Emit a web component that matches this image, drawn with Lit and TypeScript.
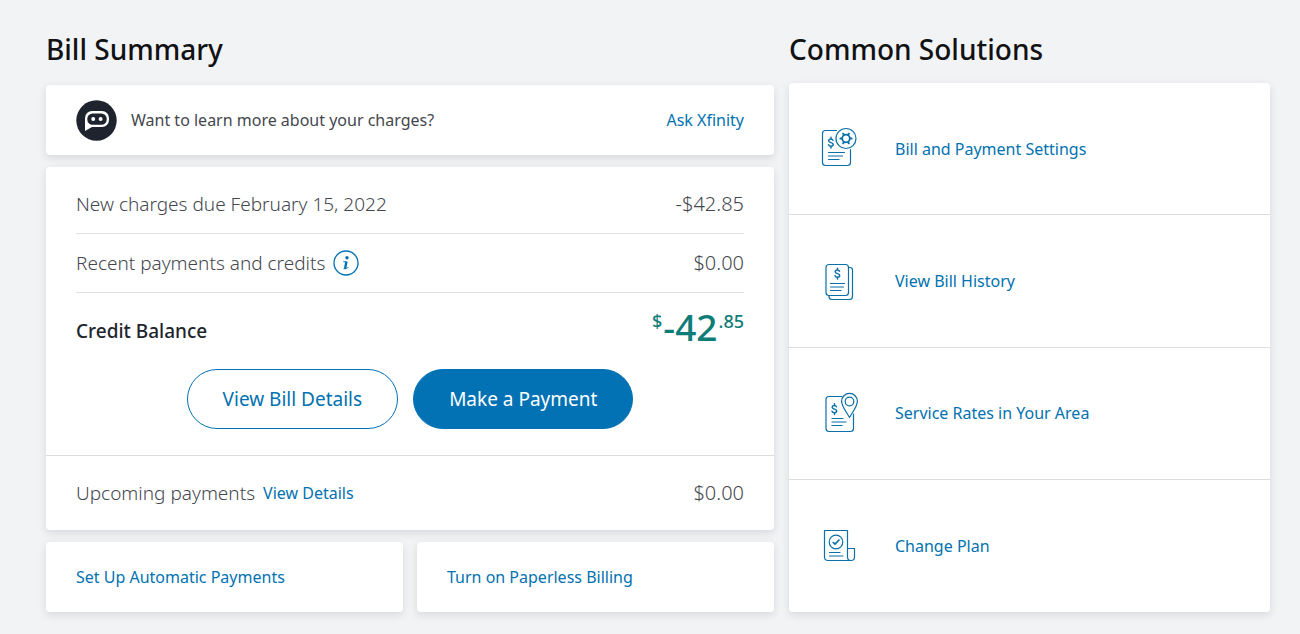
import { LitElement, html, css, svg } from "lit";
import { customElement } from "lit/decorators.js";

const dollar = (x: number, y: number) => svg`
  <path transform="translate(${x} ${y})" stroke-width="1.5"
    d="M5 3.2C4.6 2.3 3.8 2 2.8 2 1.500 2 .7 2.700 .7 3.700c0 2.500 4.500 1.300 4.500 3.800C5.200 8.600 4.200 9.200 3 9.200 1.800 9.200 .9 8.700 .5 7.700M3 .2V2M3 9.200V11" />`;

const settingsIcon = svg`
  <g transform="translate(0 1)">
    <path d="M26.500 10.500H15.500a3 3 0 0 0-3 3v29a3 3 0 0 0 3 3h22a3 3 0 0 0 3-3V29.500" />
    ${dollar(18, 17)}
    <path d="M18.500 32.500h16M18.500 36h14M18.500 39.500h10.500" />
    <circle cx="36" cy="18.500" r="10" />
    <circle cx="36" cy="18.500" r="3.800" stroke-width="1.800" />
    <path stroke-width="2" d="M33.800 14.700l-.6-1M38.200 14.700l.6-1M40.400 18.500h1.200M38.200 22.300l.6 1M33.800 22.300l-.6 1M31.600 18.500h-1.200" />
  </g>`;

const historyIcon = svg`
  <g transform="translate(0 -1)">
    <rect x="16" y="14.500" width="22.500" height="31" rx="3" />
    <path d="M38.500 17.500h1.500a2.500 2.500 0 0 1 2.500 2.500v26.500a3 3 0 0 1-3 3H22a3 3 0 0 1-3-3v-1" />
    ${dollar(24.5, 18)}
    <path d="M20.500 33.500h14M20.500 37h13M20.500 40.500h10.500" />
  </g>`;

const ratesIcon = svg`
  <g transform="translate(0 -1)">
    <path d="M32 14.500H19a3 3 0 0 0-3 3v29a3 3 0 0 0 3 3h21.500a3 3 0 0 0 3-3V32" />
    ${dollar(21.5, 21.5)}
    <path d="M22 36.500h11M22 40h14M22 43.500h10" />
    <path d="M39.500 35.500C36.500 30 31.600 24.500 31.600 19.300a7.900 7.900 0 0 1 15.800 0c0 5.200-4.900 10.700-7.900 16.200z" />
    <circle cx="39.500" cy="19.500" r="4.300" />
  </g>`;

const planIcon = svg`
  <path d="M14.500 14.500h23v26.500a3.500 3.500 0 0 0 7 0V32.500h-7M14.500 14.500v26.500a3.500 3.500 0 0 0 3.500 3.500h23" />
  <circle cx="26" cy="26" r="6.800" />
  <path stroke-width="1.700" d="M23.200 26.500l1.800 1.700 4-4.200" />
  <path d="M19.500 36.500h10.500M19.500 40h13.500" />`;

const solutions = [
  { label: "Bill and Payment Settings", icon: settingsIcon },
  { label: "View Bill History", icon: historyIcon },
  { label: "Service Rates in Your Area", icon: ratesIcon },
  { label: "Change Plan", icon: planIcon },
];

@customElement("app-root")
export class AppRoot extends LitElement {
  static styles = css`
    :host {
      display: block;
      min-height: 100vh;
      box-sizing: border-box;
      padding: 29px 30px 20px 46px;
      background: #f2f3f5;
      color: #44474e;
      font-family: "Noto Sans", "Open Sans", sans-serif;
      font-size: 16px;
      line-height: 24px;
    }
    * { box-sizing: border-box; }
    .page {
      display: grid;
      grid-template-columns: minmax(0, 728fr) minmax(0, 481fr);
      gap: 15px;
    }
    .column { display: flex; flex-direction: column; }
    h2 {
      margin: 0;
      font-size: 28px;
      line-height: 40px;
      font-weight: 500;
      color: #111214;
    }
    .summary { gap: 12px; }
    .summary h2 { margin-bottom: 4px; }
    .solutions { gap: 14px; }
    .card {
      background: #fff;
      border-radius: 4px;
      box-shadow: 0 3px 8px rgba(20, 30, 50, 0.12);
    }
    a { color: #0272b0; text-decoration: none; }
    .ask {
      display: flex;
      align-items: center;
      gap: 14px;
      height: 70px;
      padding: 0 30px;
    }
    .ask a { margin-left: auto; }
    .bot { width: 41px; height: 41px; display: block; }
    .charges { padding: 8px 30px 26px; }
    .row {
      display: flex;
      align-items: center;
      justify-content: space-between;
      font-size: 19px;
      line-height: 28px;
      font-weight: 300;
    }
    .line { height: 59px; border-bottom: 1px solid #e0e1e4; }
    .label { display: flex; align-items: center; gap: 8px; }
    .amount { font-size: 20px; }
    .info {
      display: flex;
      padding: 0;
      border: 0;
      background: none;
    }
    .balance { height: 76px; }
    .balance-label { font-size: 19px; font-weight: 500; color: #22252c; }
    .total {
      display: flex;
      align-items: flex-start;
      gap: 1px;
      color: #0f7d77;
      font-size: 18px;
      line-height: 24px;
      font-weight: 500;
      padding-bottom: 8px;
    }
    .whole { font-size: 37px; line-height: 36px; }
    .actions { display: flex; justify-content: center; gap: 15px; }
    .actions button {
      height: 60px;
      padding: 0 35px;
      border: 1px solid #0272b4;
      border-radius: 30px;
      background: #fff;
      color: #0272b0;
      font: inherit;
      font-size: 19px;
    }
    .actions .primary { background: #0272b4; color: #fff; }
    .upcoming { padding: 23px 30px; border-top: 1px solid #dcdde0; }
    .upcoming a { font-size: 16px; font-weight: 400; }
    .links { display: grid; grid-template-columns: 1fr 1fr; gap: 14px; }
    .links a { padding: 23px 30px; }
    .list { flex: 1; display: grid; grid-auto-rows: 1fr; }
    .item { display: flex; align-items: center; padding: 0 21px; gap: 25px; }
    .item:not(:last-child) { border-bottom: 1px solid #dcdde0; }
    .icon {
      width: 60px;
      height: 60px;
      fill: none;
      stroke: #0b6fa8;
      stroke-width: 1.2;
      stroke-linecap: round;
      stroke-linejoin: round;
    }
  `;

  render() {
    return html`
      <main class="page">
        <section class="column summary">
          <h2>Bill Summary</h2>
          <div class="card ask">
            <svg class="bot" viewBox="0 0 41 41" aria-hidden="true">
              <circle cx="20.500" cy="20.500" r="20.200" fill="#1f232e" />
              <path fill="#fff" d="M16 11h10a7 7 0 0 1 7 7v2a7 7 0 0 1-7 7H16l-7 4V18a7 7 0 0 1 7-7z" />
              <rect x="11.300" y="13.400" width="19.400" height="11.400" rx="5.300" fill="#1f232e" />
              <circle cx="17.200" cy="19" r="2" fill="#fff" />
              <circle cx="24.600" cy="19" r="2" fill="#fff" />
            </svg>
            <span>Want to learn more about your charges?</span>
            <a href="#ask">Ask Xfinity</a>
          </div>
          <div class="card">
            <div class="charges">
              <div class="row line">
                <span>New charges due February 15, 2022</span><span class="amount">-$42.85</span>
              </div>
              <div class="row line">
                <span class="label">Recent payments and credits
                  <button class="info" aria-label="About payments and credits">
                    <svg width="26" height="26" viewBox="0 0 26 26">
                      <circle cx="13" cy="13" r="12" fill="none" stroke="#0272b4" stroke-width="1.300" />
                      <circle cx="14" cy="7.800" r="1.700" fill="#0272b4" />
                      <path fill="none" stroke="#0272b4" d="M10.300 11.800h3.200M10.600 18.600c2 .6 4-.2 4.600-1.400" />
                      <path fill="none" stroke="#0272b4" stroke-width="2.400" d="M13.500 11.400l-1.400 7" />
                    </svg>
                  </button>
                </span>
                <span class="amount">$0.00</span>
              </div>
              <div class="row balance">
                <span class="balance-label">Credit Balance</span>
                <span class="total"><span>$</span><span class="whole">-42</span><span>.85</span></span>
              </div>
              <div class="actions">
                <button>View Bill Details</button>
                <button class="primary">Make a Payment</button>
              </div>
            </div>
            <div class="row upcoming">
              <span class="label">Upcoming payments <a href="#upcoming">View Details</a></span>
              <span class="amount">$0.00</span>
            </div>
          </div>
          <nav class="links">
            <a class="card" href="#autopay">Set Up Automatic Payments</a>
            <a class="card" href="#paperless">Turn on Paperless Billing</a>
          </nav>
        </section>
        <section class="column solutions">
          <h2>Common Solutions</h2>
          <nav class="card list">
            ${solutions.map(
              (s) => html`<a class="item" href="#solution">
                <svg class="icon" viewBox="0 0 60 60" aria-hidden="true">${s.icon}</svg>
                <span>${s.label}</span>
              </a>`
            )}
          </nav>
        </section>
      </main>
    `;
  }
}
